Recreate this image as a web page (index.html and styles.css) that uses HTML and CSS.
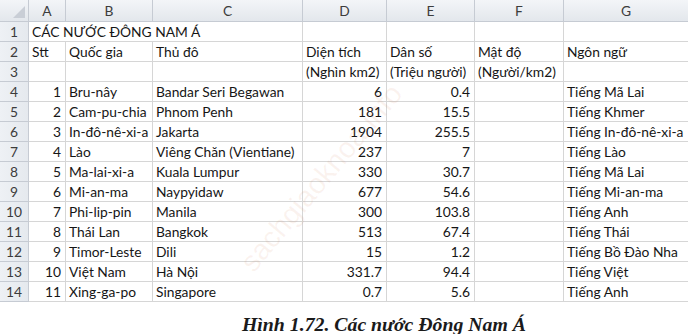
FILE: index.html
```html
<!DOCTYPE html>
<html lang="vi">
<head>
<meta charset="utf-8">
<title>Các nước Đông Nam Á</title>
<link rel="stylesheet" href="styles.css">
</head>
<body>
<div class="sheet">
  <div class="grid">
    <div class="corner"><span class="tri"></span></div>
    <div class="ch">A</div><div class="ch">B</div><div class="ch">C</div><div class="ch">D</div><div class="ch">E</div><div class="ch">F</div><div class="ch last">G</div>

    <div class="rh">1</div>
    <div class="c span3">CÁC NƯỚC ĐÔNG NAM Á</div><div class="c"></div><div class="c"></div><div class="c"></div><div class="c last"></div>

    <div class="rh">2</div>
    <div class="c">Stt</div><div class="c">Quốc gia</div><div class="c">Thủ đô</div><div class="c">Diện tích</div><div class="c">Dân số</div><div class="c">Mật độ</div><div class="c last">Ngôn ngữ</div>

    <div class="rh">3</div>
    <div class="c"></div><div class="c"></div><div class="c"></div><div class="c">(Nghìn km2)</div><div class="c">(Triệu người)</div><div class="c">(Người/km2)</div><div class="c last"></div>

    <div class="rh">4</div>
    <div class="c n">1</div><div class="c">Bru-nây</div><div class="c">Bandar Seri Begawan</div><div class="c n">6</div><div class="c n">0.4</div><div class="c"></div><div class="c last">Tiếng Mã Lai</div>

    <div class="rh">5</div>
    <div class="c n">2</div><div class="c">Cam-pu-chia</div><div class="c">Phnom Penh</div><div class="c n">181</div><div class="c n">15.5</div><div class="c"></div><div class="c last">Tiếng Khmer</div>

    <div class="rh">6</div>
    <div class="c n">3</div><div class="c">In-đô-nê-xi-a</div><div class="c">Jakarta</div><div class="c n">1904</div><div class="c n">255.5</div><div class="c"></div><div class="c last">Tiếng In-đô-nê-xi-a</div>

    <div class="rh">7</div>
    <div class="c n">4</div><div class="c">Lào</div><div class="c">Viêng Chăn (Vientiane)</div><div class="c n">237</div><div class="c n">7</div><div class="c"></div><div class="c last">Tiếng Lào</div>

    <div class="rh">8</div>
    <div class="c n">5</div><div class="c">Ma-lai-xi-a</div><div class="c">Kuala Lumpur</div><div class="c n">330</div><div class="c n">30.7</div><div class="c"></div><div class="c last">Tiếng Mã Lai</div>

    <div class="rh">9</div>
    <div class="c n">6</div><div class="c">Mi-an-ma</div><div class="c">Naypyidaw</div><div class="c n">677</div><div class="c n">54.6</div><div class="c"></div><div class="c last">Tiếng Mi-an-ma</div>

    <div class="rh">10</div>
    <div class="c n">7</div><div class="c">Phi-lip-pin</div><div class="c">Manila</div><div class="c n">300</div><div class="c n">103.8</div><div class="c"></div><div class="c last">Tiếng Anh</div>

    <div class="rh">11</div>
    <div class="c n">8</div><div class="c">Thái Lan</div><div class="c">Bangkok</div><div class="c n">513</div><div class="c n">67.4</div><div class="c"></div><div class="c last">Tiếng Thái</div>

    <div class="rh">12</div>
    <div class="c n">9</div><div class="c">Timor-Leste</div><div class="c">Dili</div><div class="c n">15</div><div class="c n">1.2</div><div class="c"></div><div class="c last">Tiếng Bồ Đào Nha</div>

    <div class="rh">13</div>
    <div class="c n">10</div><div class="c">Việt Nam</div><div class="c">Hà Nội</div><div class="c n">331.7</div><div class="c n">94.4</div><div class="c"></div><div class="c last">Tiếng Việt</div>

    <div class="rh">14</div>
    <div class="c n">11</div><div class="c">Xing-ga-po</div><div class="c">Singapore</div><div class="c n">0.7</div><div class="c n">5.6</div><div class="c"></div><div class="c last">Tiếng Anh</div>
  </div>
  <div class="watermark">sachgiaoknoa.info</div>
</div>
<p class="caption">Hình 1.72. Các nước Đông Nam Á</p>
</body>
</html>
```

FILE: styles.css
```css
html, body {
  margin: 0;
  padding: 0;
  background: #ffffff;
}
body {
  width: 688px;
  height: 334px;
  overflow: hidden;
}
.sheet {
  position: relative;
  overflow: hidden;
  width: 688px;
}
.grid {
  display: grid;
  grid-template-columns: 29px 37px 87px 150px 84px 88px 89px 124px;
  grid-template-rows: 22px repeat(14, 20px);
  font-family: Lato, "Liberation Sans", sans-serif;
  font-size: 13.8px;
  color: #161616;
}
.corner, .ch, .rh {
  box-sizing: border-box;
  background: linear-gradient(#f3f5f8, #e3e7ec);
  border-right: 1px solid #c6cbd3;
  border-bottom: 1px solid #c6cbd3;
  color: #3c3c3c;
}
.corner {
  position: relative;
}
.tri {
  position: absolute;
  right: 3px;
  bottom: 3px;
  width: 0;
  height: 0;
  border-left: 12px solid transparent;
  border-bottom: 12px solid #c9ced6;
}
.ch {
  display: flex;
  align-items: center;
  justify-content: center;
}
.ch.last { border-right: none; }
.rh {
  display: flex;
  align-items: center;
  justify-content: center;
  background: linear-gradient(90deg, #eef1f5, #e5e9ee);
}
.c {
  box-sizing: border-box;
  border-right: 1px solid #d6d6d6;
  border-bottom: 1px solid #d6d6d6;
  padding: 0 3px;
  display: flex;
  align-items: center;
  white-space: nowrap;
  overflow: visible;
}
.c.last { border-right: none; }
.c.n {
  justify-content: flex-end;
  padding-right: 4px;
}
.span3 {
  grid-column: span 3;
}
.watermark {
  position: absolute;
  left: 246px;
  top: 252px;
  font-family: "Liberation Sans", sans-serif;
  font-size: 29px;
  line-height: 30px;
  color: rgba(210, 120, 80, 0.09);
  transform: rotate(-50deg);
  transform-origin: 0 50%;
  white-space: nowrap;
  pointer-events: none;
}
.caption {
  margin: 0;
  height: 32px;
  box-sizing: border-box;
  padding-left: 80px;
  padding-top: 11px;
  text-align: center;
  font-family: "Liberation Serif", serif;
  font-weight: bold;
  font-style: italic;
  font-size: 19.8px;
  line-height: 22px;
  color: #1a1a1a;
}
```
